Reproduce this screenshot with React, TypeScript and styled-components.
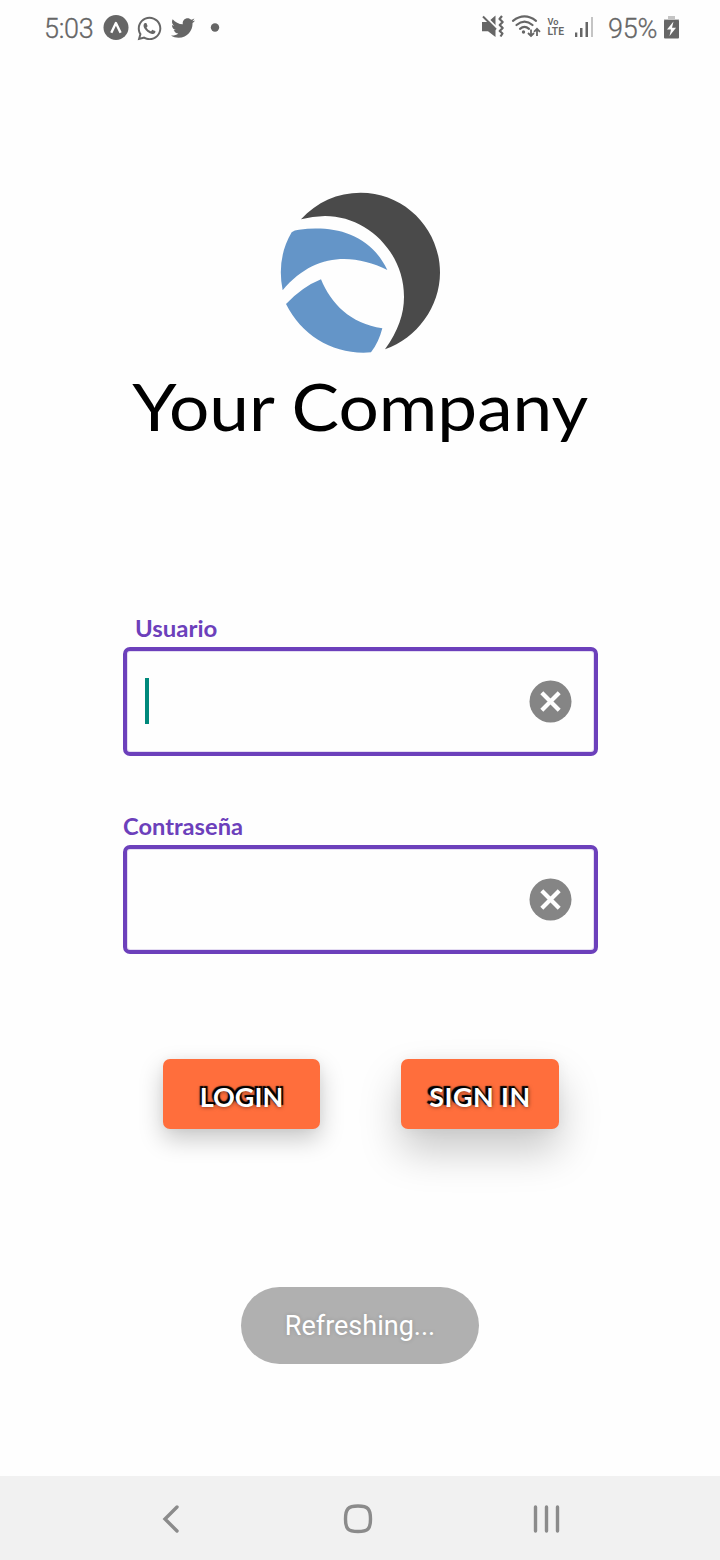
import React from "react";
import styled, { createGlobalStyle } from "styled-components";
import { FaWhatsapp, FaTwitter } from "react-icons/fa";

const GlobalStyle = createGlobalStyle`
  * { box-sizing: border-box; }
  html, body { margin: 0; padding: 0; background: #fefefe; }
`;

const Screen = styled.div`
  width: 720px;
  height: 1560px;
  display: flex;
  flex-direction: column;
  align-items: center;
  background: #fefefe;
  overflow: hidden;
  font-family: Lato, "Liberation Sans", sans-serif;
`;

const StatusBar = styled.header`
  width: 100%;
  height: 56px;
  flex: none;
  padding: 0 41px 0 44px;
  display: flex;
  align-items: center;
  justify-content: space-between;
  color: #666;
  font-family: Roboto, sans-serif;
`;

const StatusGroup = styled.div`
  display: flex;
  align-items: center;
  height: 56px;
  svg { display: block; flex: none; }
`;

const StatusText = styled.span<{ $width: number; $spacing: number }>`
  width: ${(p) => p.$width}px;
  padding-top: 1px;
  font-size: 27px;
  font-weight: 300;
  line-height: 56px;
  letter-spacing: ${(p) => p.$spacing}px;
  white-space: nowrap;
  -webkit-text-stroke: 0.3px #666;
`;

const Brand = styled.section`
  display: flex;
  flex-direction: column;
  align-items: center;
  margin-top: 124px;
  svg { display: block; }
`;

const Title = styled.h1`
  margin: 0;
  padding-left: 1px;
  height: 90px;
  font-size: 65px;
  line-height: 82px;
  font-weight: 400;
  white-space: nowrap;
  color: #000;
  transform: scaleX(1.095);
`;

const Form = styled.section`
  width: 475px;
  margin-top: 161px;
  display: flex;
  flex-direction: column;
  gap: 58px;
`;

const Field = styled.div`
  display: flex;
  flex-direction: column;
`;

const Label = styled.label<{ $indent?: number; $stretch: number }>`
  height: 31px;
  margin-left: ${(p) => p.$indent ?? 0}px;
  font-size: 22px;
  line-height: 26px;
  font-weight: 700;
  color: #6c40bb;
  transform: scaleX(${(p) => p.$stretch});
  transform-origin: left;
`;

const InputBox = styled.div`
  height: 109px;
  padding: 0 22px 0 18px;
  border: 4px solid #6c40bb;
  border-radius: 7px;
  box-shadow: inset 0 0 0 1px #e4dcf2;
  display: flex;
  align-items: center;
  justify-content: space-between;
`;

const Caret = styled.span<{ $visible?: boolean }>`
  width: 4px;
  height: 46px;
  margin-bottom: 1px;
  background: ${(p) => (p.$visible ? "#00897b" : "transparent")};
`;

const Actions = styled.div`
  margin: 105px 0 0 2px;
  width: 396px;
  display: flex;
  justify-content: space-between;
`;

const Button = styled.button<{ $width: number; $shadow: string; $glyphShadow: string; $spacing: number }>`
  width: ${(p) => p.$width}px;
  height: 70px;
  padding: 5px 0 0;
  border: 0;
  border-radius: 7px;
  background: #ff6e3c;
  box-shadow: ${(p) => p.$shadow};
  color: #fff;
  font-family: inherit;
  font-size: 27px;
  font-weight: 700;
  letter-spacing: ${(p) => p.$spacing}px;
  text-shadow: ${(p) => p.$glyphShadow};
`;

const Toast = styled.div`
  margin-top: 158px;
  width: 238px;
  height: 77px;
  border-radius: 39px;
  background: #b0b0b0;
  display: flex;
  align-items: center;
  justify-content: center;
  color: #fff;
  font-family: Roboto, sans-serif;
  font-size: 27px;
  text-shadow: 0 0 4px rgba(0, 0, 0, 0.15);
`;

const NavBar = styled.nav`
  margin-top: auto;
  width: 100%;
  height: 84px;
  flex: none;
  padding: 1px 160px 0 162px;
  background: #f1f1f1;
  display: flex;
  align-items: center;
  justify-content: space-between;
  svg { display: block; fill: none; stroke: #8b8b8b; stroke-width: 3.4; stroke-linecap: round; }
`;

const HomeKey = styled.span`
  padding-left: 3px;
`;

const ExpoIcon = () => (
  <svg width="26" height="26" viewBox="0 0 26 26">
    <circle cx="13" cy="12.5" r="12.5" fill="#666" />
    <path d="M8.3 17.8 12.9 8 17.6 17.8" fill="none" stroke="#fff" strokeWidth="2.4" strokeLinejoin="round" />
  </svg>
);

const SystemIcons = () => (
  <svg width="122" height="56" viewBox="480 0 122 56">
    <path fill="#666" d="M482 22h6l7.500-6.500V37L488 31.300h-6z" />
    <path d="M484.500 15.500 497 28" stroke="#fefefe" strokeWidth="2" />
    <path d="M483 16.500 496 29.500" stroke="#666" strokeWidth="2" />
    <path
      d="M502 16 499.500 19 502.700 22 499.700 25 502.700 28 499.700 31 502.500 33.500 500.500 36.500"
      fill="none"
      stroke="#666"
      strokeWidth="2.200"
      strokeLinejoin="round"
    />
    <g fill="none" stroke="#666" strokeWidth="2.200" strokeLinecap="round">
      <path d="M513 20.800Q524.500 12 536 20.800M516.500 25Q524.500 18.200 532.500 25M520 28.800Q524.500 25 529 28.800" />
    </g>
    <circle cx="523.500" cy="32" r="1.700" fill="#666" />
    <g fill="none" stroke="#666" strokeWidth="1.800">
      <path d="M531 29.500V36M528 33 531 36 534 33M537 36V29M534 31.800 537 28.800 540 31.800" />
    </g>
    <g fill="#666" fontFamily="Roboto, sans-serif" fontWeight="600">
      <text x="547.500" y="25" fontSize="9" textLength="11" lengthAdjust="spacingAndGlyphs">Vo</text>
      <text x="547.500" y="35" fontSize="10" textLength="16.500" lengthAdjust="spacingAndGlyphs">LTE</text>
    </g>
    <g fill="#666">
      <rect x="575" y="32.500" width="2.300" height="4.500" />
      <rect x="580" y="28" width="2.500" height="9" />
      <rect x="585.500" y="22" width="2.500" height="15" />
      <rect x="591" y="17" width="2" height="20" fill="#c4c4c4" />
    </g>
  </svg>
);

const BatteryIcon = () => (
  <svg width="15" height="24" viewBox="0 0 15 24">
    <path d="M4 0h7v3h4v3H0V3h4z" fill="#c4c4c4" />
    <rect y="4" width="15" height="18.500" rx="1" fill="#666" />
    <path d="M9.500 5.500 3 13.500h4L5.500 20 12 11.700H8z" fill="#fefefe" />
  </svg>
);

const Logo = () => (
  <svg width="190" height="185" viewBox="0 0 570 555">
    <path fill="#4a4a4a" d="M108 118C155 66 218 38 287 38C419 38 525 146 525 278C525 380 456 474 360 508C400 452 417 402 417 350C417 215 305 108 180 108Q142 109 108 118Z" />
    <path fill="#6495c8" d="M80 157Q88 150 102 149C208 136 314 160 367 270C262 218 145 220 53 331Q34 235 80 157Z" />
    <path fill="#6495c8" d="M63 372Q113 320 168 298C197 370 256 431 352 445Q341 488 318 517C210 526 112 470 63 372Z" />
  </svg>
);

const ClearIcon = () => (
  <svg width="43" height="43" viewBox="0 0 43 43">
    <circle cx="21.500" cy="21.500" r="21" fill="#858585" />
    <path d="M12.800 12.800 30.200 30.200M30.200 12.800 12.800 30.200" stroke="#fff" strokeWidth="4.200" />
  </svg>
);

const FieldRow = ({ label, indent, stretch, focused }: { label: string; indent?: number; stretch: number; focused?: boolean }) => (
  <Field>
    <Label $indent={indent} $stretch={stretch}>{label}</Label>
    <InputBox>
      <Caret $visible={focused} />
      <ClearIcon />
    </InputBox>
  </Field>
);

const Gap = styled.span<{ $w: number }>`
  width: ${(p) => p.$w}px;
  flex: none;
`;

export default function App() {
  return (
    <Screen>
      <GlobalStyle />
      <StatusBar>
        <StatusGroup>
          <StatusText $width={59} $spacing={-0.3}>5:03</StatusText>
          <ExpoIcon />
          <Gap $w={7} />
          <FaWhatsapp size={27} />
          <Gap $w={8} />
          <FaTwitter size={24} />
          <Gap $w={15} />
          <svg width="10" height="10"><circle cx="5" cy="4.500" r="4.200" fill="#666" /></svg>
        </StatusGroup>
        <StatusGroup>
          <SystemIcons />
          <Gap $w={6} />
          <StatusText $width={56} $spacing={-0.2}>95%</StatusText>
          <BatteryIcon />
        </StatusGroup>
      </StatusBar>
      <Brand>
        <Logo />
        <Title>Your Company</Title>
      </Brand>
      <Form>
        <FieldRow label="Usuario" indent={12} stretch={1.09} focused />
        <FieldRow label="Contraseña" stretch={1.075} />
      </Form>
      <Actions>
        <Button
          $width={157}
          $spacing={0}
          $shadow="0 10px 24px rgba(0,0,0,0.22), 0 0 10px rgba(0,0,0,0.04)"
          $glyphShadow="-2px -2px 1px #000, 2px -2px 1px #000, 0 0 4px rgba(0,0,0,0.6)"
        >
          LOGIN
        </Button>
        <Button
          $width={158}
          $spacing={0.4}
          $shadow="0 22px 42px rgba(0,0,0,0.21), 0 0 14px rgba(0,0,0,0.05)"
          $glyphShadow="-3px -2px 1px #000, 0 -2px 1px #000, 0 0 4px rgba(0,0,0,0.6)"
        >
          SIGN IN
        </Button>
      </Actions>
      <Toast>Refreshing...</Toast>
      <NavBar>
        <svg width="18" height="28" viewBox="0 0 18 28"><path d="M15 2 3 14 15 26" /></svg>
        <HomeKey>
          <svg width="30" height="30" viewBox="0 0 30 30"><path d="M15 2C25 2 27.500 5 27.500 15S25 27.500 15 27.500 2.500 25 2.500 15 5 2 15 2Z" /></svg>
        </HomeKey>
        <svg width="27" height="28" viewBox="0 0 27 28"><path d="M2.500 2V26M13.500 2V26M24.500 2V26" /></svg>
      </NavBar>
    </Screen>
  );
}
